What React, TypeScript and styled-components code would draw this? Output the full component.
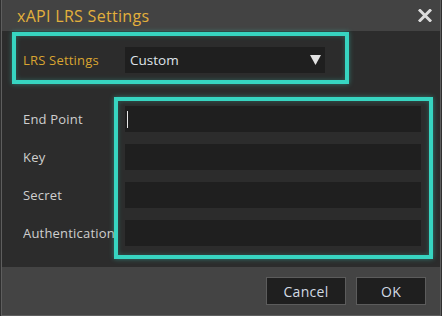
import styled, { createGlobalStyle } from 'styled-components'

const GlobalStyle = createGlobalStyle`
  html, body {
    margin: 0;
    padding: 0;
    background: #2f2f2f;
    font-family: 'Open Sans', 'Liberation Sans', sans-serif;
  }
`

const fields = ['End Point', 'Key', 'Secret', 'Authentication']

export default function App() {
  return (
    <>
      <GlobalStyle />
      <Dialog>
        <TitleBar>
          <Title>xAPI LRS Settings</Title>
          <CloseButton aria-label="Close">
            <svg width="14" height="13" viewBox="0 0 14 13">
              <path d="M2 1.5 L12 11.5 M12 1.5 L2 11.5" stroke="#dcdcdc" strokeWidth="3" strokeLinecap="square" />
            </svg>
          </CloseButton>
        </TitleBar>

        <Body>
          <Row>
            <Label $accent>LRS Settings</Label>
            <Select>
              <span>Custom</span>
              <svg width="11" height="10" viewBox="0 0 11 10">
                <polygon points="0,0 11,0 5.5,10" fill="#e2e2e2" />
              </svg>
            </Select>
          </Row>

          <FieldList>
            {fields.map((name, index) => (
              <Row key={name}>
                <Label>{name}</Label>
                <Field>{index === 0 ? <Caret /> : null}</Field>
              </Row>
            ))}
          </FieldList>
        </Body>

        <Footer>
          <Button $width={80}>Cancel</Button>
          <Button $width={70}>OK</Button>
        </Footer>

        <Highlight $left={10} $top={32} $width={337} $height={52} />
        <Highlight $left={112} $top={97} $width={319} $height={162} />
      </Dialog>
    </>
  )
}

const Dialog = styled.div`
  position: relative;
  box-sizing: border-box;
  display: flex;
  flex-direction: column;
  width: 440px;
  height: 316px;
  margin-left: 1px;
  border: 1px solid #5e5e5e;
  border-top: none;
  background: #2c2c2c;
`

const TitleBar = styled.div`
  display: flex;
  align-items: center;
  justify-content: space-between;
  height: 31px;
  padding: 0 7px 0 15px;
  background: #434343;
`

const Title = styled.div`
  color: #e2b03c;
  font-size: 16px;
  letter-spacing: 0.3px;
`

const CloseButton = styled.div`
  display: flex;
  width: 16px;
  height: 16px;
  align-items: center;
  justify-content: center;
`

const Body = styled.div`
  flex: 1;
  display: flex;
  flex-direction: column;
  gap: 33px;
  padding: 16px 19px 0 21px;
`

const FieldList = styled.div`
  display: flex;
  flex-direction: column;
  gap: 12px;
`

const Row = styled.div`
  display: flex;
  align-items: center;
`

const Label = styled.div<{ $accent?: boolean }>`
  width: 91px;
  margin-right: 11px;
  overflow: hidden;
  white-space: nowrap;
  font-size: 13px;
  letter-spacing: 0.2px;
  color: ${(p) => (p.$accent ? '#d9a531' : '#cfcfcf')};
`

const Select = styled.div`
  box-sizing: border-box;
  display: flex;
  align-items: center;
  justify-content: space-between;
  width: 200px;
  height: 26px;
  padding: 0 4px 0 5px;
  background: #1f1f1f;
  color: #dfe3ea;
  font-size: 13.5px;
`

const Field = styled.div`
  display: flex;
  align-items: center;
  width: 296px;
  height: 26px;
  padding-left: 2px;
  box-sizing: border-box;
  background: #1f1f1f;
`

const Caret = styled.span`
  width: 1px;
  height: 17px;
  background: #e8e8e8;
`

const Footer = styled.div`
  display: flex;
  justify-content: flex-end;
  align-items: center;
  gap: 10px;
  height: 48px;
  padding-right: 14px;
  background: #444444;
`

const Button = styled.div<{ $width: number }>`
  box-sizing: border-box;
  display: flex;
  align-items: center;
  justify-content: center;
  width: ${(p) => p.$width}px;
  height: 28px;
  border: 1px solid #5c5c5c;
  background: #1f1f1f;
  color: #d2dae4;
  font-size: 14px;
  letter-spacing: 0.3px;
`

const Highlight = styled.div<{ $left: number; $top: number; $width: number; $height: number }>`
  position: absolute;
  box-sizing: border-box;
  left: ${(p) => p.$left}px;
  top: ${(p) => p.$top}px;
  width: ${(p) => p.$width}px;
  height: ${(p) => p.$height}px;
  border: 4px solid #37d5c1;
  box-shadow: 0 0 5px rgba(55, 213, 193, 0.45), inset 0 0 5px rgba(55, 213, 193, 0.3);
  pointer-events: none;
`
